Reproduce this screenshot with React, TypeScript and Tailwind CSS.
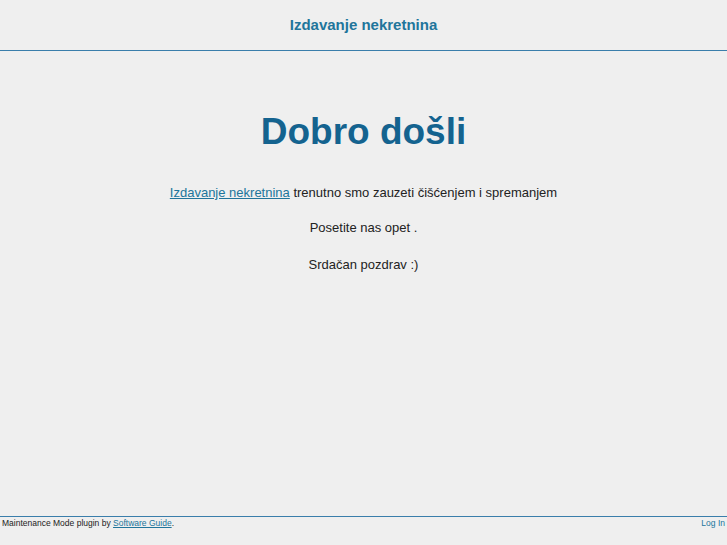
import React from 'react';

const App: React.FC = () => {
  return (
    <div className="h-screen min-h-[545px] flex flex-col bg-[#efefef] text-[#222] font-['Liberation_Sans',Arial,sans-serif]">
      <header className="h-[51px] shrink-0 border-b border-[#3a7eab] flex items-center justify-center">
        <a href="#" className="text-[15px] font-bold text-[#21759b] no-underline pt-[1px]">
          Izdavanje nekretnina
        </a>
      </header>

      <main className="flex-1 text-center">
        <h1 className="mt-[62px] text-[37px] leading-[37px] font-bold text-[#14638f]">Dobro došli</h1>
        <div className="mt-[34px] text-[13px] leading-[18px]">
          <p>
            <a href="#" className="text-[#21759b] underline">Izdavanje nekretnina</a> trenutno smo zauzeti čišćenjem i spremanjem
          </p>
          <p className="mt-[17px]">Posetite nas opet .</p>
          <p className="mt-[19px]">Srdačan pozdrav :)</p>
        </div>
      </main>

      <footer className="h-[29px] shrink-0 border-t border-[#3a7eab] flex justify-between px-[2px] pt-[1px] text-[8.5px] leading-[11px]">
        <span>
          Maintenance Mode plugin by <a href="#" className="text-[#21759b] underline">Software Guide</a>.
        </span>
        <a href="#" className="text-[#21759b] no-underline">Log In</a>
      </footer>
    </div>
  );
};

export default App;
